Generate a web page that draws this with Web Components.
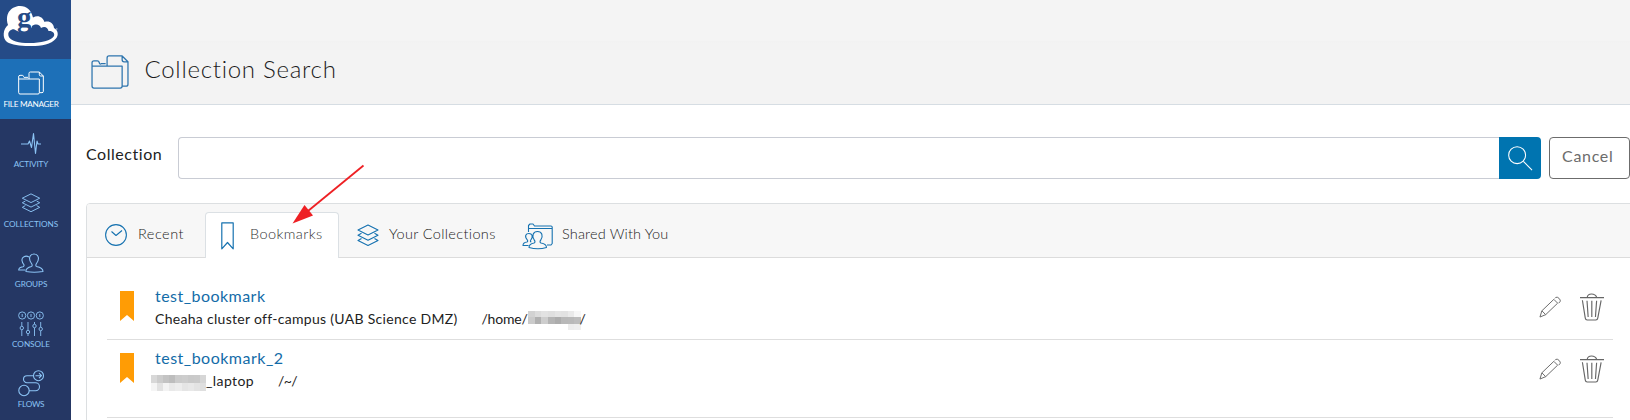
<!DOCTYPE html>
<html lang="en">
<head>
<meta charset="utf-8">
<title>Collection Search</title>
<style>
html,body{margin:0;height:420px;overflow:hidden;background:#fff}
body{font-family:Lato,"Open Sans",sans-serif;color:#222}
</style>
</head>
<body>
<app-shell></app-shell>
<script>
const define = (name, html, setup) => {
  const t = document.createElement('template');
  t.innerHTML = html;
  customElements.define(name, class extends HTMLElement {
    connectedCallback() {
      if (this.shadowRoot) return;
      this.attachShadow({mode: 'open'}).append(t.content.cloneNode(true));
      if (setup) setup(this, this.shadowRoot);
    }
  });
};

/* One line of text, tracked so that it fills the width given in "w". */
define('fit-text', `<style>:host{display:block;flex:none;white-space:nowrap;line-height:20px}span{display:inline-block}</style><span><slot></slot></span>`,
  (el, root) => {
    const w = +el.getAttribute('w'), s = root.querySelector('span');
    el.style.width = w + 'px';
    s.style.letterSpacing = '0px';
    const n = el.textContent.length;
    s.style.letterSpacing = ((w - s.getBoundingClientRect().width) / n).toFixed(3) + 'px';
  });

const files = '<path d="M1 7.5V32a2 2 0 0 0 2 2h27a2 2 0 0 0 2-2V11.500H1M1 8V8a2 2 0 0 1 2-2h3.500q1.500 0 2 2t2 1h4.500M16.500 11.500V3a2 2 0 0 1 2-2H32l6 6V30a2 2 0 0 1-2 2h-4M32 1v4a2 2 0 0 0 2 2h4"/>';
const layers = '<path d="M11 1 1 6l10 5 10-5zM4.500 9.300 1 11.200l10 5 10-5-3.500-1.900M4.500 14.500 1 16.500 11 21.500l10-5-3.500-2"/>';
const icons = {
  files: ['0 0 39 35', files],
  pulse: ['0 0 20 21', '<path d="M0 11h7l1.500-3 2 6.500L12.500 .5 14.500 20.500 16 8l1 3h3"/>'],
  layers: ['0 0 22 23', layers],
  groups: ['0 0 26 20', '<path d="M8 18.500q-.5-3.500 5.500-5c1-.5.800-1.800 0-3C10 6 11.500 1 16 1s6 5 2.500 9.500c-.8 1.200-1 2.500 0 3q6.500 1.200 6.500 5Q16 20 8 18.500zM11 4C7.500 2 3.500 4 4 7.500c.2 2 1 3 1.800 4 .5 1 .2 2-.8 2.300Q.7 14.500.7 17h6.500"/>'],
  console: ['0 0 26 25', '<circle cx="4.200" cy="4.500" r="3.600"/><circle cx="13" cy="4.500" r="3.600"/><circle cx="21.800" cy="4.500" r="3.600"/><path d="M4.200 3v3M13 3v3M21.800 3v3M3.800 11v4m0 4v6M10 11v8m0 4v2M16.500 11v2m0 4v8M22.700 11v5m0 4v5"/><circle cx="3.800" cy="17" r="1.700"/><circle cx="10" cy="21" r="1.700"/><circle cx="16.500" cy="15" r="1.700"/><circle cx="22.700" cy="18" r="1.700"/>'],
  flows: ['0 0 26 26', '<circle cx="20.500" cy="5.700" r="5"/><circle cx="6" cy="20.500" r="5.200"/><path d="M17.500 5.700h6m-2.500-2.500 2.500 2.500-2.500 2.500M15.500 5.700H9a3.500 3.500 0 0 0 0 7h8.500a4 4 0 0 1 0 8H11"/>'],
  clock: ['0 0 22 22', '<circle cx="11" cy="11" r="10.400"/><path d="m6.500 7.500 4.500 4 6-5"/>'],
  ribbon: ['0 0 13 28', '<path d="M.8.8h11.400v26L6.500 20.500.8 26.800z"/>'],
  shared: ['0 0 31 27', '<path d="M6.500 9V2.500L8 1h3l1.500 2H29a1.200 1.200 0 0 1 1.200 1.200V20.500L29 22h-4M6.500 5.500h23.500M6.500 22.500H1q0-3 4-3.500c1-.3.800-1.500.3-2C2 13 4 10.500 7 10.500s4.500 3 1.800 6.500q-1 1.500.5 2M7 24.500q0-3.500 5-4.500c1.300-.4 1.200-2 .2-3C9.500 13 11 8.500 15.500 8.500s6 4.500 3.300 8.500c-1 1-1.100 2.600.2 3q5.500 1 5.500 4.500Q16 27 7 24.500z"/>'],
  search: ['0 0 26 26', '<circle cx="9.500" cy="9.500" r="8.800"/><path d="m16 16 9 9"/>'],
  mark: ['0 0 14 30', '<path d="M0 0h14v30L7 24 0 30z" fill="#ff9c05" stroke="none"/>'],
  pencil: ['0 0 23 23', '<path d="M1 22l2-6.500L15.500 3.500l4 4L7 19.500zM3 15.500l4 4M16.500 2.500l1-1q1.500-1 3.500 1t1 3.500L20.500 7.500"/>'],
  trash: ['0 0 25 29', '<path d="M0 4.700h25M7.500 4.500Q8 1 12 1t5.500 3.500M2.500 7.500 5.500 26q.3 2 2 2h9q1.700 0 2-2L22 7.500M7.300 8l1.200 17M12.300 8v17M17.300 8l-1.200 17"/>']
};
define('line-icon', `<style>:host{display:block;flex:none}svg{display:block;width:100%;height:100%;overflow:visible}</style>`,
  (el, root) => {
    const [vb, body] = icons[el.getAttribute('name')];
    el.style.width = el.getAttribute('w') + 'px';
    el.style.height = el.getAttribute('h') + 'px';
    root.innerHTML += `<svg viewBox="${vb}" fill="none" stroke="currentColor" stroke-width="${el.getAttribute('stroke') || 1.1}" stroke-linejoin="round">${body}</svg>`;
  });

/* Pixelated strip that hides a private name; "rows" lists grey levels per row. */
define('pixel-mask', `<style>:host{display:block;flex:none}svg{display:block}</style>`,
  (el, root) => {
    const rows = el.getAttribute('rows').split('/').map(r => r.split(' '));
    const hs = el.getAttribute('heights').split(' ').map(Number);
    const w = +el.getAttribute('w');
    let y = 0, out = '';
    rows.forEach((r, i) => {
      r.forEach((g, j) => out += `<rect x="${j * w / r.length}" y="${y}" width="${w / r.length}" height="${hs[i]}" fill="#${g}${g}${g}"/>`);
      y += hs[i];
    });
    root.innerHTML += `<svg width="${w}" height="${y}" shape-rendering="crispEdges">${out}</svg>`;
  });

define('nav-item', `<style>
:host{display:flex;flex-direction:column;align-items:center;box-sizing:border-box;height:60px;padding-right:9px;color:#8cc4f5;font-size:8.200px}
:host([active]){background:#1d70b8;color:#fff}
.i{height:41px;display:flex;align-items:center;padding-top:0}
</style><div class="i"><slot name="icon"></slot></div><slot></slot>`);

define('side-bar', `<style>
:host{display:block;width:71px;height:420px;background:#253764;flex:none}
.logo{height:59px;background:#254b87}
.logo svg{display:block}
nav{display:flex;flex-direction:column}
line-icon{margin-top:7px}
fit-text{line-height:10px;margin-top:-1px}
</style>
<div class="logo"><svg width="71" height="59" viewBox="0 0 71 59"><path fill="#fff" d="M8 25C4 12 13 6 20 6c7 0 11 4 13 11.500 5-3 10-.5 11.500 4.500 5-1.500 9 1.500 9.500 6 4 2 5 7 2 10.500-5 6-14 7.500-25 7.500-10 .2-19-1-24-4C2 38 3 29 8 25z"/><path fill="#254b87" d="M12 29.500c3-1 5 2.500 10 3 5 .3 9-2 10-6.500 4-2.500 8-1.500 9 2 4-2.500 7 0 7.500 3 4-.5 6.500 2 5.500 5-2 4.500-14 7-24 7-9 .2-20-1.500-21.500-7-.8-3 .5-5.500 3.500-6.500z"/><path fill="#fff" d="M16 29q5 3.500 12 2.500l4-5-1-6-5 7z"/><text x="17" y="26.500" font-family="Liberation Serif,serif" font-weight="700" font-size="29" fill="#254b87">g</text><circle cx="56.800" cy="29" r=".7" fill="#b9c8de"/></svg></div>
<nav>
<nav-item active><line-icon slot="icon" name="files" w="26" h="24" stroke="1.500"></line-icon><fit-text w="55">FILE MANAGER</fit-text></nav-item>
<nav-item><line-icon slot="icon" name="pulse" w="20" h="21"></line-icon><fit-text w="34.500">ACTIVITY</fit-text></nav-item>
<nav-item><line-icon slot="icon" name="layers" w="20" h="20"></line-icon><fit-text w="54.500">COLLECTIONS</fit-text></nav-item>
<nav-item><line-icon slot="icon" name="groups" w="26" h="20"></line-icon><fit-text w="32.500">GROUPS</fit-text></nav-item>
<nav-item><line-icon slot="icon" name="console" w="26" h="25" stroke=".9"></line-icon><fit-text w="38">CONSOLE</fit-text></nav-item>
<nav-item><line-icon slot="icon" name="flows" w="26" h="26"></line-icon><fit-text w="26.500">FLOWS</fit-text></nav-item>
</nav>`);

define('page-header', `<style>
:host{display:flex;box-sizing:border-box;height:105px;background:linear-gradient(#f4f4f4 41px,#f2f2f2 41px,#f3f3f3 43px);border-bottom:1px solid #d6dde3;padding-left:20px}
line-icon{margin-top:55px;margin-left:-.5px;color:#2e75ae}
fit-text{margin:54px 0 0 16px;line-height:30px;font-size:24px;font-weight:300;color:#1c1c1c}
</style><line-icon name="files" w="38" h="34" stroke="1.300"></line-icon><fit-text w="192.500">Collection Search</fit-text>`);

define('search-bar', `<style>
:host{display:flex;height:42px;margin-top:32px;padding-left:15px}
.l{margin-top:7px;font-size:16px;color:#222;width:92px;flex:none}
.box{flex:1;box-sizing:border-box;border:1px solid #c9ccd4;border-right:0;border-radius:4px 0 0 4px}
.go{width:42px;background:#0074b0;border-radius:0 4px 4px 0;display:flex;align-items:center;justify-content:center;color:#fff}
.cancel{box-sizing:border-box;width:81px;margin-left:8px;border:1px solid #6c6c6c;border-radius:4px;padding:8px 0 0 12px;color:#6c6c6c;font-size:16px}
</style><div class="l"><fit-text w="76.500">Collection</fit-text></div><div class="box"></div><div class="go"><line-icon name="search" w="25" h="25"></line-icon></div><div class="cancel"><fit-text w="51.500">Cancel</fit-text></div>`);

define('tab-item', `<style>
:host{display:flex;box-sizing:border-box;height:45px;border:1px solid transparent;border-bottom:0;font-size:14.500px;font-weight:300;color:#222}
:host([active]){background:#fff;border-color:#dbe0e4;border-radius:4px 4px 0 0;margin-bottom:-1px;height:46px;color:#333}
::slotted(line-icon){color:#1672b0}
</style><slot></slot>`);

define('tab-strip', `<style>
:host{display:flex;box-sizing:border-box;height:54px;background:#f7f7f7;border-bottom:1px solid #dcdcdc;padding:8px 0 0}
.r{width:118px}.b{width:134px}.y{width:167px}
fit-text{margin-top:11px}
.r line-icon{margin:11px 11px 0 17px}
.b line-icon{margin:9px 16px 0 15px}
.y line-icon{margin:11px 10px 0 17px}
.s line-icon{margin:10px 9px 0 15px}
</style>
<tab-item class="r"><line-icon name="clock" w="22" h="22"></line-icon><fit-text w="46">Recent</fit-text></tab-item>
<tab-item class="b" active><line-icon name="ribbon" w="13" h="28" stroke="1.200"></line-icon><fit-text w="72.500">Bookmarks</fit-text></tab-item>
<tab-item class="y"><line-icon name="layers" w="22" h="23"></line-icon><fit-text w="107">Your Collections</fit-text></tab-item>
<tab-item class="s"><line-icon name="shared" w="31" h="27"></line-icon><fit-text w="106.500">Shared With You</fit-text></tab-item>`);

define('bookmark-row', `<style>
:host{display:flex;box-sizing:border-box;margin:0 17px 0 20px;border-bottom:1px solid #dedede;padding-left:13px}
.m{flex:1;padding-left:21px}
.t{display:block;color:#146ca8;font-size:16px;height:20px}
.d{display:flex;font-size:14px;color:#222;height:20px;margin-top:3px}
line-icon{color:#666}
.p{margin:5px 19px 0 0}.x{margin:2px 9px 0 0}
</style><line-icon name="mark" w="14" h="30"></line-icon>
<div class="m"><div class="t"><slot name="title"></slot></div><div class="d"><slot></slot></div></div>
<line-icon class="p" name="pencil" w="22" h="22" stroke="1"></line-icon><line-icon class="x" name="trash" w="24" h="28" stroke="1.200"></line-icon>`);

define('result-panel', `<style>
:host{display:block;box-sizing:border-box;height:230px;margin:24px -4px 0 15px;border:1px solid #dcdfe1;border-radius:4px;overflow:hidden}
bookmark-row{margin-right:20px}
.one{height:82px;padding-top:33px}
.two{height:78px;padding-top:13px}
.one fit-text[slot=title],.two fit-text[slot=title]{margin-top:-5px}
.g{margin-left:24.500px}
</style><tab-strip></tab-strip>
<bookmark-row class="one"><fit-text slot="title" w="110.500">test_bookmark</fit-text><fit-text w="302">Cheaha cluster off-campus (UAB Science DMZ)</fit-text><fit-text class="g" w="46">/home/</fit-text><pixel-mask style="margin-top:2px" w="53" heights="6 7 6" rows="d2 dc e2 df e4 e2 ea f7/ca b0 cd b4 ac b8 b9 bd/fe ff ff fe ff ff ed ef"></pixel-mask><fit-text style="margin-left:-1px" w="5">/</fit-text></bookmark-row>
<bookmark-row class="two"><fit-text slot="title" w="128.500">test_bookmark_2</fit-text><pixel-mask style="margin:4px 0 0 -4px" w="55" heights="8 8" rows="d8 cc c3 bd cb cd c9 ca d6/f5 e2 f3 e9 ed e5 e8 e3 df"></pixel-mask><fit-text w="48">_laptop</fit-text><fit-text class="g" style="margin-left:24px" w="19">/~/</fit-text></bookmark-row>`);

/* Callout arrow that lies over the page and points at the active tab. */
define('callout-arrow', `<style>:host{position:absolute;left:290px;top:162px;pointer-events:none}svg{display:block}</style>
<svg width="78" height="64"><path d="M73.500 3.500 18 49" stroke="#ee2024" stroke-width="1.800"/><path d="M2.500 61.500 14.500 43l8.500 10.500z" fill="#ee2024"/></svg>`);

define('app-shell', `<style>:host{display:flex;height:420px;overflow:hidden;position:relative}main{flex:1;min-width:0}</style>
<side-bar></side-bar><main><page-header></page-header><search-bar></search-bar><result-panel></result-panel></main><callout-arrow></callout-arrow>`);
</script>
</body>
</html>
